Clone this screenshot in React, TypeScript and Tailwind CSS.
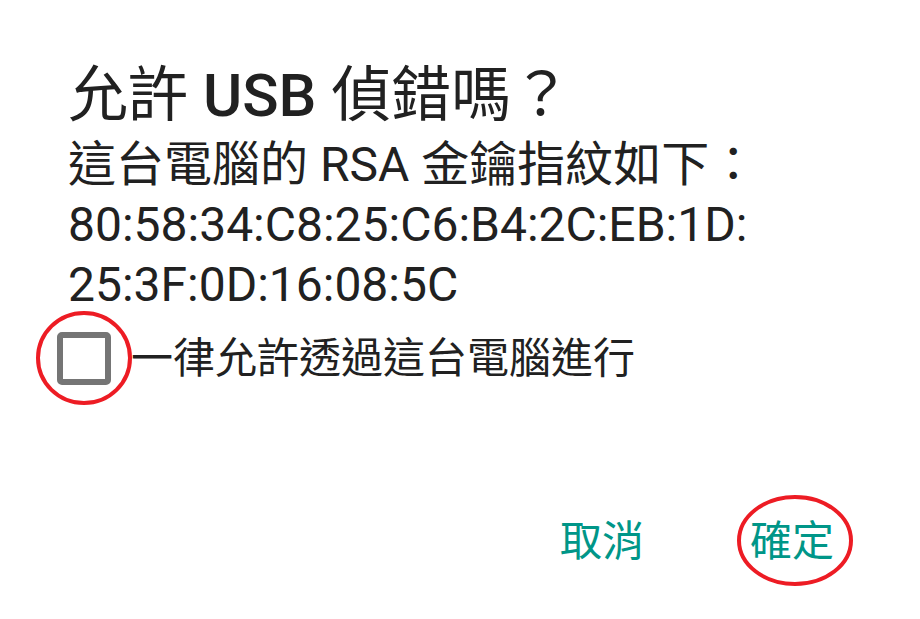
import React from "react";

const RED = "#ed1c24";

function RingMark({ w, h, className }: { w: number; h: number; className: string }) {
  return (
    <svg width={w} height={h} className={className} viewBox={`0 0 ${w} ${h}`} fill="none">
      <ellipse cx={w / 2} cy={h / 2} rx={w / 2 - 2} ry={h / 2 - 2} stroke={RED} strokeWidth={4} />
    </svg>
  );
}

export default function App() {
  return (
    <div className="relative h-[619px] w-[920px] overflow-hidden bg-white font-['Roboto','Noto_Sans_CJK_TC',sans-serif] text-[#212121]">
      <div className="pt-[60px]">
        <h1 className="pl-[68px] text-[60px] font-normal leading-[72px] whitespace-nowrap">
          允許 <span className="font-medium">USB</span> 偵錯嗎？
        </h1>
        <p className="mt-[3px] pl-[68px] text-[48px] leading-[60px] whitespace-nowrap">
          這台電腦的 RSA 金鑰指紋如下：
          <br />
          80:58:34:C8:25:C6:B4:2C:EB:1D:
          <br />
          25:3F:0D:16:08:5C
        </p>

        <label className="mt-[17px] flex items-center gap-[20px] pl-[57px]">
          <span className="relative block h-[53px] w-[54px] shrink-0 rounded-[5px] border-[6px] border-[#757575] bg-white">
            <RingMark w={96} h={94} className="absolute -left-[27px] -top-[27px]" />
          </span>
          <span className="text-[42px] leading-[50px] whitespace-nowrap">一律允許透過這台電腦進行</span>
        </label>
      </div>

      <div className="mt-[132px] flex justify-end gap-[106px] pr-[86px] text-[42px] leading-[50px] text-[#009688]">
        <button className="whitespace-nowrap">取消</button>
        <button className="relative whitespace-nowrap">
          確定
          <RingMark w={116} h={91} className="absolute -left-[13px] -top-[22px]" />
        </button>
      </div>
    </div>
  );
}
